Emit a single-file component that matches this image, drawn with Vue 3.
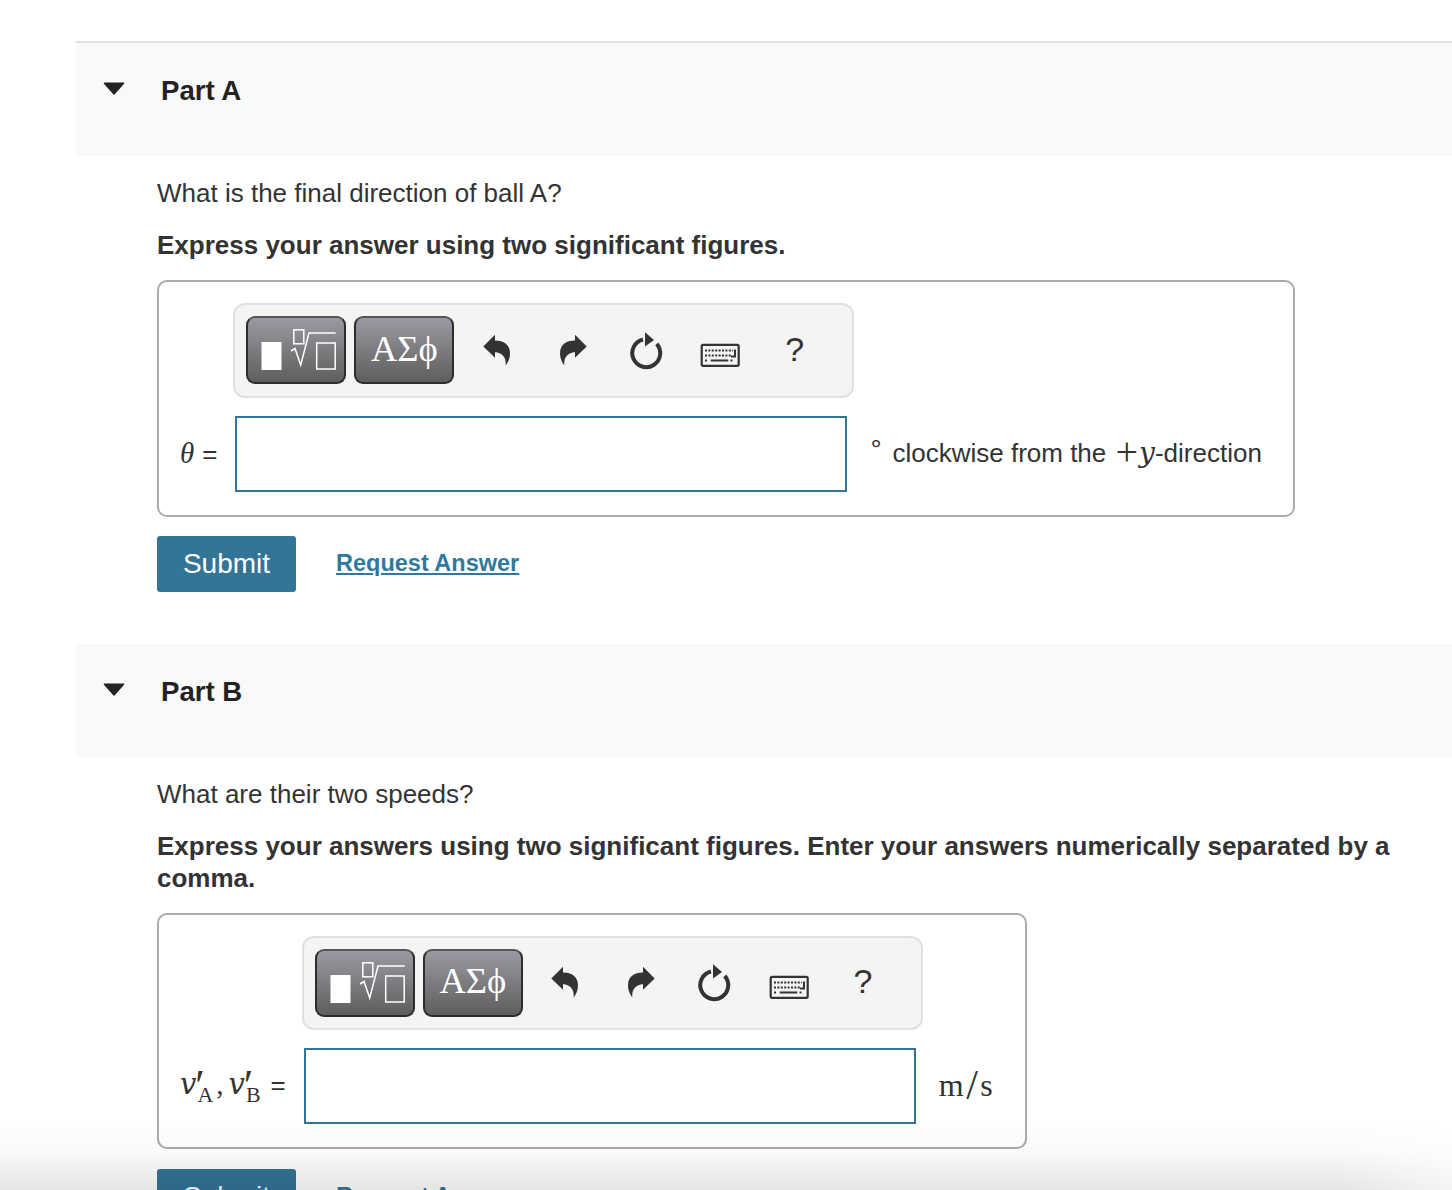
<script setup>
const parts = [
  {
    name: 'Part A',
    question: 'What is the final direction of ball A?',
    hint: 'Express your answer using two significant figures.',
    id: 'a'
  },
  {
    name: 'Part B',
    question: 'What are their two speeds?',
    hint: 'Express your answers using two significant figures. Enter your answers numerically separated by a comma.',
    id: 'b'
  }
]
</script>

<template>
  <div class="page">
    <section v-for="part in parts" :key="part.id" class="part" :class="'part-' + part.id">
      <header class="part-head">
        <svg class="caret" viewBox="0 0 22 13" width="22" height="13">
          <path d="M1.5 1.2H20.5L11 12Z" fill="#222" stroke="#222" stroke-width="1.5" stroke-linejoin="round" />
        </svg>
        <h2>{{ part.name }}</h2>
      </header>

      <div class="part-body">
        <p class="question">{{ part.question }}</p>
        <p class="hint">{{ part.hint }}</p>

        <div class="answer-box">
          <div class="toolbar">
            <button class="tool-btn">
              <svg viewBox="2 2 96 64" width="96" height="64">
                <rect x="15.5" y="26" width="20" height="28" fill="#fff" />
                <rect x="47.8" y="13.8" width="10" height="14" fill="none" stroke="#fff" stroke-width="1.5" />
                <path d="M45 35L49 32.5L54.7 49L63 17H89.7" fill="none" stroke="#fff" stroke-width="1.5" />
                <rect x="70.7" y="27" width="18.5" height="26" fill="none" stroke="#fff" stroke-width="1.5" />
              </svg>
            </button>
            <button class="tool-btn greek">ΑΣϕ</button>

            <span class="tool-cell">
              <svg viewBox="0 1.5 34 38" width="34" height="38">
                <path d="M3.3 16L15 4.3V10C24 10 30 14 30 23C30 28 28 32 25.7 35C26 30 25 26 21 23.5C19 22.3 17 21.7 15 21.7V27.3Z" fill="#333" />
              </svg>
            </span>
            <span class="tool-cell redo">
              <svg viewBox="0 1.5 34 38" width="34" height="38">
                <path transform="matrix(-1 0 0 1 34 0)" d="M3.3 16L15 4.3V10C24 10 30 14 30 23C30 28 28 32 25.7 35C26 30 25 26 21 23.5C19 22.3 17 21.7 15 21.7V27.3Z" fill="#333" />
              </svg>
            </span>
            <span class="tool-cell">
              <svg viewBox="0 2.5 40 40" width="40" height="40">
                <path d="M30.7 15.3A14 14 0 1 1 17 11" fill="none" stroke="#333" stroke-width="4" />
                <path d="M19 3.7L28 11.5L19 18Z" fill="#333" />
              </svg>
            </span>
            <span class="tool-cell">
              <svg viewBox="0 0 40 32" width="40" height="32">
                <rect x="1.7" y="9.8" width="37" height="21" rx="1.5" fill="none" stroke="#333" stroke-width="2.2" />
                <path d="M5 15.5H33M5 20.5H31M5 25.5H8M30.5 25.5H33.5" fill="none" stroke="#333" stroke-width="2" stroke-dasharray="2 1.4" />
                <path d="M10.7 25.5H28.3M35 14.5V21.5H31" fill="none" stroke="#333" stroke-width="2" />
              </svg>
            </span>
            <span class="tool-cell help">?</span>
          </div>

          <label class="var-label">
            <template v-if="part.id === 'a'">
              <i class="math">θ</i><span class="eq">=</span>
            </template>
            <template v-else>
              <i class="vee">v</i><i class="prime">′</i><span class="sub">A</span><span class="math comma">,</span>
              <i class="vee">v</i><i class="prime">′</i><span class="sub">B</span><span class="eq">=</span>
            </template>
          </label>
          <input class="answer-input" type="text" />
          <div class="units">
            <template v-if="part.id === 'a'">
              <span class="degree">°</span>
              <span class="unit-text">clockwise from the <span class="math plus">+</span><i class="why">y</i>-direction</span>
            </template>
            <span v-else class="math unit-ms">m<span class="slash">/</span>s</span>
          </div>
        </div>

        <div class="actions">
          <button class="submit">Submit</button>
          <a class="request" href="#">Request Answer</a>
        </div>
      </div>
    </section>
    <div class="bottom-shade"></div>
  </div>
</template>

<style scoped>
.page {
  position: relative;
  height: 1190px;
  overflow: hidden;
  padding: 41px 0 0 76px;
  box-sizing: border-box;
  background: #fff;
  color: #333;
  font-family: "Liberation Sans", Arial, sans-serif;
  font-size: 26px;
  line-height: 32px;
}

.part-head {
  display: flex;
  align-items: flex-start;
  height: 113px;
  box-sizing: border-box;
  padding: 29px 0 0 27px;
  background: #f9f9f9;
}

.part-a .part-head {
  height: 115px;
  border-top: 2px solid #e0e0e0;
}

.caret {
  margin-top: 10px;
  flex: none;
}

.part-head h2 {
  margin: 0 0 0 36px;
  font-size: 27.6px;
  line-height: 38px;
  font-weight: 700;
  color: #222;
}

.part-body {
  padding: 21px 0 0 81px;
}

.question {
  margin: 0 0 20px;
}

.hint {
  margin: 0 0 19px;
  font-weight: 700;
  max-width: 1240px;
}

.answer-box {
  display: inline-grid;
  grid-template-columns: auto 612px auto;
  align-items: center;
  box-sizing: border-box;
  height: 237px;
  padding: 21px 31px 23px 21px;
  border: 2px solid #aaa;
  border-radius: 10px;
  vertical-align: top;
}

.part-b .answer-box {
  height: 236px;
  padding-right: 32px;
}

.toolbar {
  grid-column: 2 / 4;
  justify-self: start;
  display: flex;
  align-items: center;
  box-sizing: border-box;
  width: 621px;
  height: 95px;
  margin: 0 0 18px -2px;
  padding-left: 11px;
  background: #f4f4f4;
  border: 2px solid #e0e0e0;
  border-radius: 12px;
}

.part-b .toolbar {
  height: 94px;
}

.tool-btn {
  display: flex;
  align-items: center;
  justify-content: center;
  width: 100px;
  height: 68px;
  margin: 0 8px 1px 0;
  padding: 0;
  border: 2px solid #2c2c2c;
  border-top-color: #555;
  border-radius: 9px;
  background: linear-gradient(#9a9aa2, #5e5e5e);
  color: #fff;
}

.tool-btn.greek {
  margin-right: 5px;
  font-family: "Liberation Serif", serif;
  font-size: 36.5px;
  padding-bottom: 4px;
}

.tool-cell {
  display: flex;
  align-items: center;
  justify-content: center;
  width: 74.5px;
  height: 68px;
}

.redo svg {
  margin-left: 3px;
}

.tool-cell.help {
  font-size: 34px;
  padding-bottom: 4px;
  box-sizing: border-box;
}

.var-label {
  display: flex;
  align-items: baseline;
  margin-bottom: 2px;
  padding-right: 18px;
  white-space: nowrap;
}

.math {
  font-family: "Liberation Serif", serif;
  font-size: 29px;
}

.vee {
  font-family: "DejaVu Serif", serif;
  font-size: 29px;
  letter-spacing: -2px;
}

.eq {
  margin-left: 8px;
  font-size: 26px;
}

.part-b .eq {
  margin-left: 10px;
}

.prime {
  display: inline-block;
  width: 0;
  position: relative;
  left: -2px;
  top: 6px;
  font-family: "Liberation Serif", serif;
  font-size: 44px;
  line-height: 0;
}

.sub {
  margin-left: 3px;
  position: relative;
  top: 8px;
  font-family: "Liberation Serif", serif;
  font-size: 22px;
}

.comma {
  margin: 0 5px 0 3px;
}

.answer-input {
  box-sizing: border-box;
  width: 612px;
  height: 76px;
  padding: 0 10px;
  background: #fff;
  border: 2px solid #337596;
  border-radius: 0;
  outline: none;
}

.units {
  display: flex;
  align-items: center;
  margin-bottom: 2px;
  padding-left: 23px;
  white-space: nowrap;
}

.degree {
  width: 22px;
  font-size: 28px;
  line-height: 28px;
  align-self: flex-start;
  margin-top: -1px;
}

.plus {
  margin: 0 1px 0 2px;
  font-size: 40px;
  line-height: 20px;
  vertical-align: -3px;
}

.why {
  font-family: "DejaVu Serif", serif;
  font-size: 28px;
  line-height: 20px;
}

.unit-ms {
  display: flex;
  align-items: center;
  font-size: 32px;
}

.slash {
  margin: 0 2.5px;
  font-size: 42px;
}

.actions {
  display: flex;
  align-items: center;
  margin: 19px 0 52px;
}

.part-b .actions {
  margin-top: 20px;
}

.submit {
  width: 139px;
  height: 56px;
  padding: 0;
  border: none;
  border-radius: 3px;
  background: #337596;
  color: #fff;
  font-family: inherit;
  font-size: 28px;
}

.request {
  margin: -2px 0 0 40px;
  color: #2f7a9c;
  font-size: 23.5px;
  font-weight: 700;
}

.bottom-shade {
  position: absolute;
  left: 0;
  right: 0;
  bottom: 0;
  height: 72px;
  background: linear-gradient(rgba(0, 0, 0, 0), rgba(0, 0, 0, 0.02) 45%, rgba(0, 0, 0, 0.1));
  -webkit-mask-image: linear-gradient(90deg, #000 calc(100% - 110px), rgba(0, 0, 0, 0.4));
  mask-image: linear-gradient(90deg, #000 calc(100% - 110px), rgba(0, 0, 0, 0.4));
  pointer-events: none;
}
</style>

<style>
body {
  margin: 0;
}
</style>
